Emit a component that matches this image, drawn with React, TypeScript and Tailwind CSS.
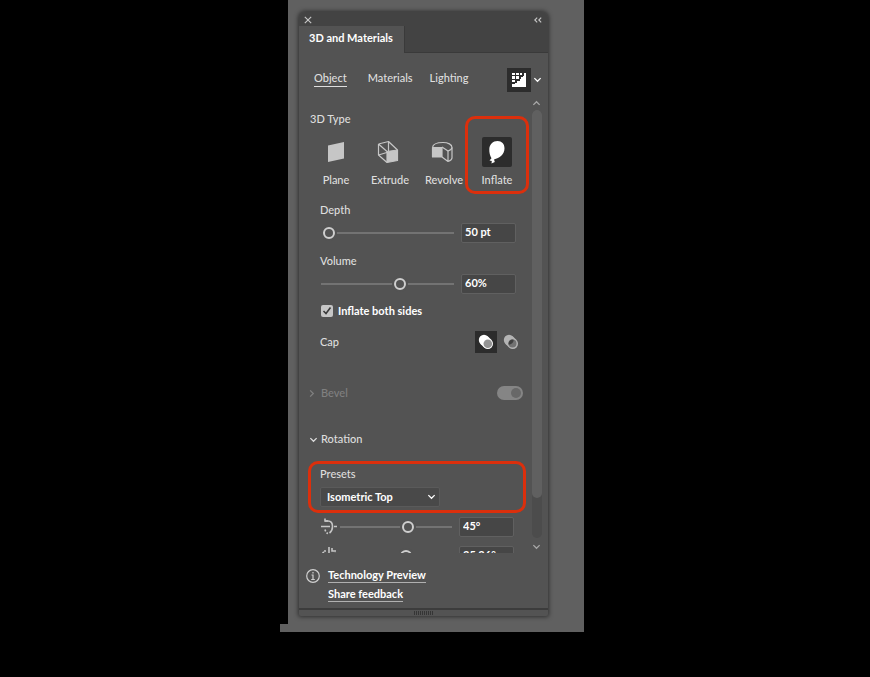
import { useState } from "react";
import type { ReactNode } from "react";

function Chevron({ className, d }: { className: string; d: string }) {
  return (
    <svg viewBox="0 0 10 10" className={className} fill="none" stroke="currentColor" strokeWidth="1.4">
      <path d={d} />
    </svg>
  );
}

const DOWN = "M1.5 3.5 5 7l3.5-3.5";
const UP = "M1.5 6.5 5 3l3.5 3.5";
const RIGHT = "M3.5 1.5 7 5 3.5 8.5";

function Slider({ label, value, onChange }: { label: string; value: number; onChange: (v: number) => void }) {
  return (
    <input
      type="range"
      aria-label={label}
      value={value}
      onChange={(e) => onChange(Number(e.target.value))}
      className="h-5 min-w-0 flex-1 appearance-none bg-transparent outline-none [&::-webkit-slider-runnable-track]:h-0.5 [&::-webkit-slider-runnable-track]:bg-[#737373] [&::-webkit-slider-thumb]:-mt-[5px] [&::-webkit-slider-thumb]:size-3 [&::-webkit-slider-thumb]:appearance-none [&::-webkit-slider-thumb]:rounded-full [&::-webkit-slider-thumb]:border-2 [&::-webkit-slider-thumb]:border-[#cfcfcf] [&::-webkit-slider-thumb]:bg-[#535353] [&::-webkit-slider-thumb]:shadow-[0_0_0_2px_#535353]"
    />
  );
}

function ValueBox({ label, text }: { label: string; text: string }) {
  return (
    <input
      type="text"
      aria-label={label}
      defaultValue={text}
      className="h-5 w-[55px] rounded-xs border border-[#606060] bg-[#464646] px-[3px] pb-1 font-bold text-white outline-none"
    />
  );
}

function TypeButton({ label, active, onClick, children }: { label: string; active: boolean; onClick: () => void; children: ReactNode }) {
  return (
    <button type="button" aria-pressed={active} onClick={onClick} className="flex flex-col items-center gap-[5px]">
      <span className={active ? "flex size-[30px] items-center justify-center rounded-xs bg-[#2c2c2c]" : "flex size-[30px] items-center justify-center"}>
        {children}
      </span>
      <span className="leading-4">{label}</span>
    </button>
  );
}

function PlaneIcon() {
  return (
    <svg viewBox="0 0 24 24" className="size-6" fill="#c6c6c6">
      <path d="M4 5.5 20 2v16.500L4 22z" />
    </svg>
  );
}

function ExtrudeIcon() {
  return (
    <svg viewBox="0 0 24 24" className="-ml-1 size-6" fill="none" stroke="#c6c6c6" strokeWidth="1.200" strokeLinejoin="round">
      <path d="M2.500 4 12.500 1.500l9 8.500M2.500 4v11l8.500 7.500M2.500 4l8.500 7.500M12.500 1.500v9.500M2.500 15l10-3" />
      <path d="M11 11.500 21.500 10v10.500L11 22.500z" fill="#c6c6c6" />
    </svg>
  );
}

function RevolveIcon() {
  return (
    <svg viewBox="0 0 24 24" className="-ml-1 size-6" fill="none" stroke="#c6c6c6" strokeWidth="1.200" strokeLinejoin="round">
      <path d="M2.500 7.500C3 3.500 8 2.500 13 2.500c5 0 9 2 9 5 0 1.500-1.500 2.500-4 3.500l-6-4" />
      <path d="M22 7.500v10.500c0 1.500-1.500 2.500-4 3.500l-6-4.500M18 11v10.500" />
      <path d="M2.500 7.500H12V17H2.500z" fill="#c6c6c6" />
    </svg>
  );
}

function BalloonIcon() {
  return (
    <svg viewBox="0 0 24 24" className="size-6" fill="#ffffff">
      <path d="M12.500 1C8 1 4.500 4.400 4.300 9c-.2 3.500.7 6.600 2.200 9.200L4.500 20.500l2.300.5-.3 2.500 3.300-1.500-.8-2.500C14.500 18.200 19.500 14.500 19.500 8.300 19.500 4 16.800 1 12.500 1z" />
    </svg>
  );
}

function RenderIcon() {
  return (
    <svg viewBox="0 0 16 16" className="size-4" fill="#ffffff">
      <path d="M1 1h3v2H1zM5 1h3v2H5zM9 1h2v2H9zM1 4h3v3H1zM5 4h3v3H5zM1 8h3v2H1z" />
      <path d="M15 1v14H1v-3h3v-1h2V9h3V7h1V5h2V4h1V1z" />
    </svg>
  );
}

function CapIcon({ hollow }: { hollow?: boolean }) {
  return hollow ? (
    <svg viewBox="0 0 16 16" className="size-4">
      <circle cx="6" cy="6" r="5.200" fill="#b4b4b4" />
      <circle cx="9.800" cy="9.800" r="5.200" fill="#b4b4b4" />
      <path d="M2.300 9.700 6.100 13.500 13.500 6.100 9.700 2.300z" fill="#b4b4b4" />
      <circle cx="9.500" cy="9.500" r="4" fill="#727272" />
      <path d="M5.700 10.700A4 4 0 0 1 10.700 5.700 5.200 5.200 0 0 1 5.700 10.700z" fill="#404040" />
    </svg>
  ) : (
    <svg viewBox="0 0 16 16" className="size-4">
      <circle cx="6" cy="6" r="5.200" fill="#ffffff" />
      <circle cx="9.800" cy="9.800" r="5.200" fill="#ffffff" />
      <path d="M2.300 9.700 6.100 13.500 13.500 6.100 9.700 2.300z" fill="#ffffff" />
      <circle cx="9.800" cy="9.800" r="4.300" fill="#949494" />
    </svg>
  );
}

function RotateXIcon() {
  return (
    <svg viewBox="0 0 18 18" className="size-[18px]" fill="none" stroke="#c6c6c6" strokeWidth="1.600">
      <path d="M1 8.500h9M14 8.500h3" />
      <path d="M5 3h3c3 0 4.500 2.500 4.500 5.500 0 3-1 5-3 6.500" />
      <path d="M5 .5V3h3" />
      <path d="M5 11.500c.5 2 1.500 3.500 3 4" strokeDasharray="2 1.500" />
    </svg>
  );
}

function RotateYIcon() {
  return (
    <svg viewBox="0 0 18 18" className="size-[18px]" fill="none" stroke="#c6c6c6" strokeWidth="1.600">
      <path d="M9 0v10M9 14v3M12 1v3h4M4 4h2" />
      <path d="M4 5C1 7 2 11 9 11.500c5 0 7.500-2.500 5.500-5.500" />
    </svg>
  );
}

export default function App() {
  const [type, setType] = useState("Inflate");
  const [depth, setDepth] = useState(2);
  const [volume, setVolume] = useState(60);
  const [rotX, setRotX] = useState(62);
  const [rotY, setRotY] = useState(60);
  const [both, setBoth] = useState(true);

  return (
    <main className="flex min-h-screen items-start justify-center bg-black pr-1.5 font-[Lato,sans-serif] text-[11px] leading-4 font-medium text-[#dedede]">
      <div className="w-[304px]">
        <div className="ml-2 bg-[#606060] pt-3 pr-9 pb-2 pl-[11px]">
          <section className="overflow-hidden rounded-t-md rounded-b-xs bg-[#535353] shadow-[0_0_4px_1px_#00000080]">
            <div className="flex h-3.5 items-center justify-between bg-[#434343] px-1 pt-0.5 text-[#c8c8c8]">
              <button type="button" aria-label="Close" className="p-px">
                <Chevron className="size-2" d="M1 1l8 8M9 1 1 9" />
              </button>
              <button type="button" aria-label="Collapse" className="pr-0.5">
                <Chevron className="size-2" d="M4 2 1 5l3 3M9 2 6 5l3 3" />
              </button>
            </div>
            <div className="flex h-[27px] border-b border-[#3a3a3a] bg-[#434343]">
              <h1 className="-mb-px w-[106px] border-r border-[#3a3a3a] bg-[#535353] pt-1 pl-2.5 text-[11px] font-bold whitespace-nowrap text-white">3D and Materials</h1>
            </div>

            <nav className="flex h-11 items-start pt-4 pl-[15px]">
              <button type="button" className="mr-[21px] border-b border-[#dedede] pt-px">Object</button>
              <button type="button" className="mr-[17px] pt-px">Materials</button>
              <button type="button" className="pt-px">Lighting</button>
              <button type="button" aria-label="Render with ray tracing" className="-mt-px ml-auto flex size-6 items-center justify-center bg-[#2c2c2c]">
                <RenderIcon />
              </button>
              <button type="button" aria-label="Render options" className="mt-1.5 mr-1.5 ml-0.5 text-white">
                <Chevron className="size-[9px]" d={DOWN} />
              </button>
            </nav>

            <div className="flex h-[456px] overflow-hidden">
              <div className="min-w-0 flex-1 pt-3.5">
                <h2 className="pl-[11px]">3D Type</h2>
                <div className="mt-2.5 grid grid-cols-[54px_54px_54px_52px] pl-2.5">
                  <TypeButton label="Plane" active={type === "Plane"} onClick={() => setType("Plane")}><PlaneIcon /></TypeButton>
                  <TypeButton label="Extrude" active={type === "Extrude"} onClick={() => setType("Extrude")}><ExtrudeIcon /></TypeButton>
                  <TypeButton label="Revolve" active={type === "Revolve"} onClick={() => setType("Revolve")}><RevolveIcon /></TypeButton>
                  <div className="relative flex justify-center">
                    <TypeButton label="Inflate" active={type === "Inflate"} onClick={() => setType("Inflate")}><BalloonIcon /></TypeButton>
                    <span className="pointer-events-none absolute -inset-x-1.5 -top-[21px] h-[78px] rounded-[10px] border-[3px] border-[#dc2f0c]" />
                  </div>
                </div>

                <div className="mt-3.5 pl-[21px]">
                  <div className="pr-[15px]">
                    <p>Depth</p>
                    <div className="mt-[5px] flex items-center gap-[7px] pl-px">
                      <Slider label="Depth" value={depth} onChange={setDepth} />
                      <ValueBox label="Depth value" text="50 pt" />
                    </div>
                    <p className="mt-2.5">Volume</p>
                    <div className="mt-[5px] flex items-center gap-[7px] pl-px">
                      <Slider label="Volume" value={volume} onChange={setVolume} />
                      <ValueBox label="Volume value" text="60%" />
                    </div>
                  </div>
                  <label className="mt-[9px] flex items-center gap-[5px] pl-px font-bold text-white">
                    <span className="relative flex size-3">
                      <input type="checkbox" checked={both} onChange={(e) => setBoth(e.target.checked)} className="peer size-3 appearance-none rounded-xs bg-[#c6c6c6]" />
                      <svg viewBox="0 0 12 12" className="pointer-events-none absolute inset-0 hidden size-3 peer-checked:block" fill="none" stroke="#3a3a3a" strokeWidth="1.600">
                        <path d="M2.500 6 5 8.500l4.500-6" />
                      </svg>
                    </span>
                    Inflate both sides
                  </label>
                  <div className="mt-[11px] flex items-center pr-2">
                    <span className="flex-1">Cap</span>
                    <button type="button" aria-label="Solid cap" className="flex size-[22px] items-center justify-center bg-[#2c2c2c]"><CapIcon /></button>
                    <button type="button" aria-label="Hollow cap" className="ml-0.5 flex size-6 items-center justify-center"><CapIcon hollow /></button>
                  </div>
                </div>

                <div className="mt-[31px] flex items-center pr-2 pl-2 text-[#808080]">
                  <Chevron className="mr-[5px] size-[9px]" d={RIGHT} />
                  <label htmlFor="bevel" className="flex-1">Bevel</label>
                  <input id="bevel" type="checkbox" role="switch" defaultChecked disabled className="h-3.5 w-[26px] appearance-none rounded-full bg-[#858585] p-0.5 before:ml-auto before:block before:size-2.5 before:rounded-full before:bg-[#686868]" />
                </div>
                <button type="button" className="mt-[30px] flex items-center pl-2.5">
                  <Chevron className="mr-[3px] size-[9px]" d={DOWN} />
                  Rotation
                </button>

                <div className="relative mt-[19px] pl-[21px]">
                  <span className="pointer-events-none absolute -top-[5px] right-[5px] left-[9px] z-10 h-[52px] rounded-[10px] border-[3px] border-[#dc2f0c]" />
                  <label htmlFor="preset" className="block">Presets</label>
                  <div className="relative mt-[5px] w-[120px]">
                    <select id="preset" className="h-5 w-full appearance-none rounded-xs border border-[#5a5a5a] bg-[#494949] pb-px pl-1.5 font-bold text-white outline-none">
                      <option>Isometric Top</option>
                      <option>Isometric Left</option>
                      <option>Isometric Right</option>
                    </select>
                    <Chevron className="pointer-events-none absolute top-[5px] right-1 size-[9px] text-white" d={DOWN} />
                  </div>
                </div>
                <div className="mt-2.5 flex flex-col gap-[9px] pr-[17px] pl-[21px]">
                  <div className="flex items-center gap-[7px]">
                    <span className="-mr-[5px]"><RotateXIcon /></span>
                    <Slider label="Rotate around X" value={rotX} onChange={setRotX} />
                    <ValueBox label="X rotation value" text="45°" />
                  </div>
                  <div className="flex items-center gap-[7px]">
                    <span className="-mr-[5px]"><RotateYIcon /></span>
                    <Slider label="Rotate around Y" value={rotY} onChange={setRotY} />
                    <ValueBox label="Y rotation value" text="35.26°" />
                  </div>
                </div>
              </div>

              <div className="mr-1.5 flex w-[11px] flex-col items-center pt-0.5 text-[#a8a8a8]">
                <Chevron className="size-[9px]" d={UP} />
                <div className="mt-0.5 w-2.5 flex-1 rounded-full bg-[#4c4c4c]">
                  <div className="h-[388px] rounded-full bg-[#606060]" />
                </div>
                <Chevron className="mt-1 mb-0.5 size-[9px]" d={DOWN} />
              </div>
            </div>

            <footer className="flex items-start gap-2 px-[7px] pt-3.5 pb-1.5 font-bold text-white">
              <svg viewBox="0 0 14 14" className="mt-0.5 size-3.5" fill="none" stroke="#d0d0d0" strokeWidth="1.200">
                <circle cx="7" cy="7" r="6.300" />
                <path d="M7 3v1.500M5.500 6H7v4.500M5.200 10.500h3.600" />
              </svg>
              <div className="flex flex-col items-start gap-1 pt-px leading-[14px]">
                <a href="#preview" className="border-b border-[#b0b0b0]">Technology Preview</a>
                <a href="#feedback" className="border-b border-[#b0b0b0]">Share feedback</a>
              </div>
            </footer>
            <div className="flex h-2 items-center justify-center border-t-2 border-[#3c3c3c]">
              <div className="flex gap-px">
                {[0, 1, 2, 3, 4, 5, 6, 7, 8, 9].map((n) => (
                  <span key={n} className="h-1 w-px bg-[#353535]" />
                ))}
              </div>
            </div>
          </section>
        </div>
        <div className="h-2 bg-[#606060]" />
      </div>
    </main>
  );
}
